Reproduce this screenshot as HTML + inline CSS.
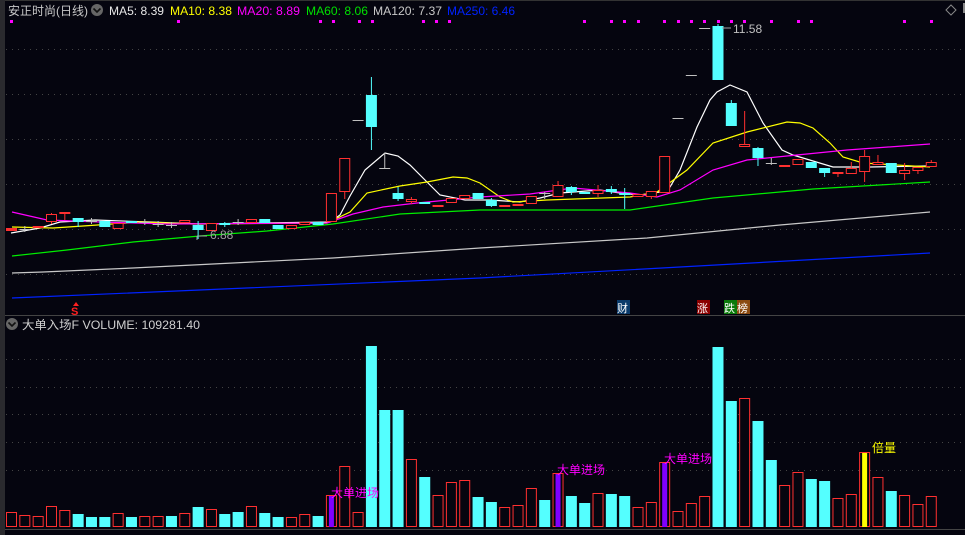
<!DOCTYPE html>
<html><head><meta charset="utf-8"><style>
html,body{margin:0;padding:0;background:#05050f;width:965px;height:535px;overflow:hidden}
svg{display:block}
text{font-family:"Liberation Sans","Noto Sans CJK SC",sans-serif}
</style></head><body>
<svg id="s" width="965" height="535" xmlns="http://www.w3.org/2000/svg">
<rect width="965" height="535" fill="#05050f"/>
<rect x="0" y="0" width="5" height="535" fill="#2a2a2e"/>
<line x1="5" y1="0.5" x2="965" y2="0.5" stroke="#333" />
<g id="grid" stroke="#444" stroke-dasharray="1,5"></g>
<line x1="5" y1="315.5" x2="965" y2="315.5" stroke="#444"/>
<line x1="5" y1="529.5" x2="965" y2="529.5" stroke="#444"/>
<g id="ma" fill="none" stroke-width="1.2"></g>
<g id="c"></g>
<g id="v"></g>
<g font-size="12">
<text x="8" y="15" fill="#c8c8c8" textLength="80" lengthAdjust="spacingAndGlyphs">安正时尚(日线)</text>
<circle cx="97" cy="10" r="6" fill="#666"/><path d="M93.5 8.5 L97 12 L100.5 8.5" stroke="#111" stroke-width="1.6" fill="none"/>
<text x="109" y="15" fill="#e8e8e8" textLength="55" lengthAdjust="spacingAndGlyphs">MA5: 8.39</text>
<text x="170" y="15" fill="#ffff00" textLength="62" lengthAdjust="spacingAndGlyphs">MA10: 8.38</text>
<text x="237" y="15" fill="#ff00ff" textLength="63" lengthAdjust="spacingAndGlyphs">MA20: 8.89</text>
<text x="306" y="15" fill="#00e000" textLength="62" lengthAdjust="spacingAndGlyphs">MA60: 8.06</text>
<text x="373" y="15" fill="#c8c8c8" textLength="69" lengthAdjust="spacingAndGlyphs">MA120: 7.37</text>
<text x="447" y="15" fill="#0022ff" textLength="68" lengthAdjust="spacingAndGlyphs">MA250: 6.46</text>
</g>
<path d="M951 5 L956 10 L951 15 L946 10 Z" stroke="#888" fill="none"/>
<rect x="963" y="3" width="2" height="10" fill="#888"/>
<g font-size="12">
<text x="733" y="33" fill="#c0c0c0">11.58</text>
<text x="210" y="239" fill="#a0a0a0">6.88</text>
<path d="M722 28 H731 M197 236 V240 M197 236 H207" stroke="#a0a0a0"/>
</g>
<g font-size="11">
<path d="M76 302 L73 306 H79 Z" fill="#ff2020"/>
<text x="71" y="315" fill="#ff2020" font-weight="bold">S</text>
<rect x="617" y="300" width="13" height="14" fill="#0a3a6a"/><text x="617" y="312" fill="#fff">财</text>
<rect x="697" y="300" width="13" height="14" fill="#8b0000"/><text x="697" y="312" fill="#fff">涨</text>
<rect x="724" y="300" width="13" height="14" fill="#0a7a0a"/><text x="724" y="312" fill="#fff">跌</text>
<rect x="737" y="300" width="13" height="14" fill="#8b4a10"/><text x="737" y="312" fill="#fff">榜</text>
</g>
<circle cx="12" cy="324" r="6" fill="#666"/><path d="M8.5 322.5 L12 326 L15.5 322.5" stroke="#111" stroke-width="1.6" fill="none"/>
<text x="22" y="329" font-size="12" fill="#d0d0d0" textLength="178" lengthAdjust="spacingAndGlyphs">大单入场F VOLUME: 109281.40</text>
<g font-size="12">
<text x="331" y="497" fill="#ff00ff">大单进场</text>
<text x="557" y="474" fill="#ff00ff">大单进场</text>
<text x="664" y="463" fill="#ff00ff">大单进场</text>
<text x="872" y="452" fill="#ffff00">倍量</text>
</g>
</svg>
<script>
var NS="http://www.w3.org/2000/svg";
function el(p,t,a){var e=document.createElementNS(NS,t);for(var k in a)e.setAttribute(k,a[k]);document.getElementById(p).appendChild(e);return e;}
[49,94,139,184,229,274,359,387,414,442,470].forEach(function(y){el("grid","line",{x1:6,y1:y+.5,x2:965,y2:y+.5});});
[10,177,319,332,358,371,422,435,448,583,610,623,637,663,677,690,703,717,730,743,770,797,810,903,930].forEach(function(x){el("s","rect",{x:x,y:20,width:3,height:3,fill:"#ff00ff"});});
function X(i){return 6+13.33*i;}
var V=[["r",512],["r",515],["r",516],["r",506],["r",510],["c",514],["c",517],["c",517],["r",513],["c",517],["r",516],["r",516],["c",516],["r",513],["c",507],["r",509],["c",514],["c",512],["r",506],["c",513],["c",517],["r",517],["r",514],["c",516],["p",495],["r",466],["r",512],["c",346],["c",410],["c",410],["r",459],["c",477],["r",495],["r",482],["r",480],["c",497],
["c",502],["r",507],["r",505],["r",488],["c",500],["p",473],["c",496],["c",503],["r",493],["c",494],["c",496],["r",507],["r",502],["p",462],["r",511],["r",503],["r",496],["c",347],["c",401],["r",398],["c",421],["c",460],["r",485],["r",472],["c",479],["c",481],["r",498],["r",494],["y",452],["r",477],["c",491],["r",495],["r",504],["r",496]];
var B=527;
V.forEach(function(d,i){var x=X(i),t=d[1],h=B-t;
 if(d[0]=="c")el("v","rect",{x:x,y:t,width:11,height:h,fill:"#54ffff"});
 else{el("v","rect",{x:x+.5,y:t+.5,width:10,height:h-1,fill:"#05050f",stroke:"#ff3030"});
  if(d[0]=="p")el("v","rect",{x:x+3,y:t+1,width:5,height:h-1,fill:"#8000ff"});
  if(d[0]=="y")el("v","rect",{x:x+3,y:t+1,width:5,height:h-1,fill:"#ffff00"});}
});
var C=[["R",228,231],["x",229,229,226,232],["R",226,227],["r",214,222,213,224],["r",212,214,212,220],["c",218,222,218,227],["x",221,221,218,224],["c",221,227],["r",223,229],["c",221,223],["x",222,222,219,225],["x",224,224,221,227],["x",225,225,222,228],["r",220,223],["c",225,230,221,239],["r",223,231],["c",223,225,222,227],["x",222,222,219,225],["r",219,223],["c",219,223],["c",225,229],["r",225,229],["r",222,225],["c",222,225],["r",193,222],["r",158,192,158,199],["d",120,120],["c",95,127,77,150],["x",168,168,153,168],["c",193,199,187,201],["r",199,202,197,204],["c",202,204],["r",205,207],["r",198,203],["r",195,199],["c",193,199],
["c",200,206,198,207],["R",205,207],["R",204,206],["r",196,204],["x",193,193,192,199],["r",185,197,181,197],["c",187,192,186,195],["c",192,194],["r",190,194,185,197],["c",189,192,186,194],["c",193,195,188,209],["r",194,197],["r",191,197,191,199],["r",156,193],["d",118,118],["d",75,75],["d",28,28],["c",26,80,24,80],["c",103,126,100,126],["r",144,147,111,147],["c",148,158,147,166],["x",163,163,158,165],["R",165,167],["r",159,165],["c",162,168],["c",168,173,168,177],["r",172,174,172,177],["r",168,174,162,174],["r",156,172,150,182],["r",162,165,155,165],["c",163,173],["r",170,174,163,180],["r",167,171,167,174],["r",162,167,160,167]];
C.forEach(function(d,i){var x=X(i),cx=x+5.5,t=d[0],a=d[1],b=d[2];
 var col=(t=="c")?"#54ffff":(t=="d"||t=="x")?"#c0c0c0":"#ff3030";
 if(d[3]!==undefined)el("c","line",{x1:cx,y1:d[3],x2:cx,y2:d[4],stroke:col});
 if(t=="c")el("c","rect",{x:x,y:a,width:11,height:Math.max(b-a,1),fill:col});
 else if(t=="R")el("c","rect",{x:x,y:a,width:11,height:Math.max(b-a,2),fill:col});
 else if(t=="r")el("c","rect",{x:x+.5,y:a+.5,width:10,height:Math.max(b-a-1,1),fill:"#05050f",stroke:col});
 else el("c","line",{x1:x,y1:a+.5,x2:x+11,y2:a+.5,stroke:col});
});
var M=[
["#ffffff","11,233 40,228 60,222 95,220 150,222 200,224 260,223 330,222 340,215 350,196 365,170 385,153 398,156 410,165 425,180 440,195 465,200 490,200 520,202 540,198 560,193 600,190 620,193 640,195 660,192 670,187 680,170 697,127 710,100 717,92 730,85 747,92 763,123 782,150 793,155 833,167 870,167 927,166"],
["#ffff00","12,227 53,228 83,226 140,222 193,224 327,223 350,212 367,193 400,186 427,182 453,177 467,178 480,183 500,197 513,202 547,200 630,197 657,192 687,170 713,143 747,132 787,122 800,123 813,128 830,143 843,157 863,163 930,167"],
["#ff00ff","12,212 47,220 100,222 167,224 327,223 353,214 383,207 417,203 480,197 530,194 573,188 630,193 657,197 680,190 713,170 747,160 797,155 847,150 930,144"],
["#00ee00","12,256 67,250 133,242 200,236 267,231 333,224 400,214 480,210 630,210 713,198 813,189 930,182"],
["#c8c8c8","12,273 43,272 133,268 233,263 333,258 480,248 647,238 780,225 930,212"],
["#0022ff","12,298 200,290 480,278 680,267 930,253"]];
M.forEach(function(m){el("ma","polyline",{points:m[1],stroke:m[0]});});
</script>
</body></html>
